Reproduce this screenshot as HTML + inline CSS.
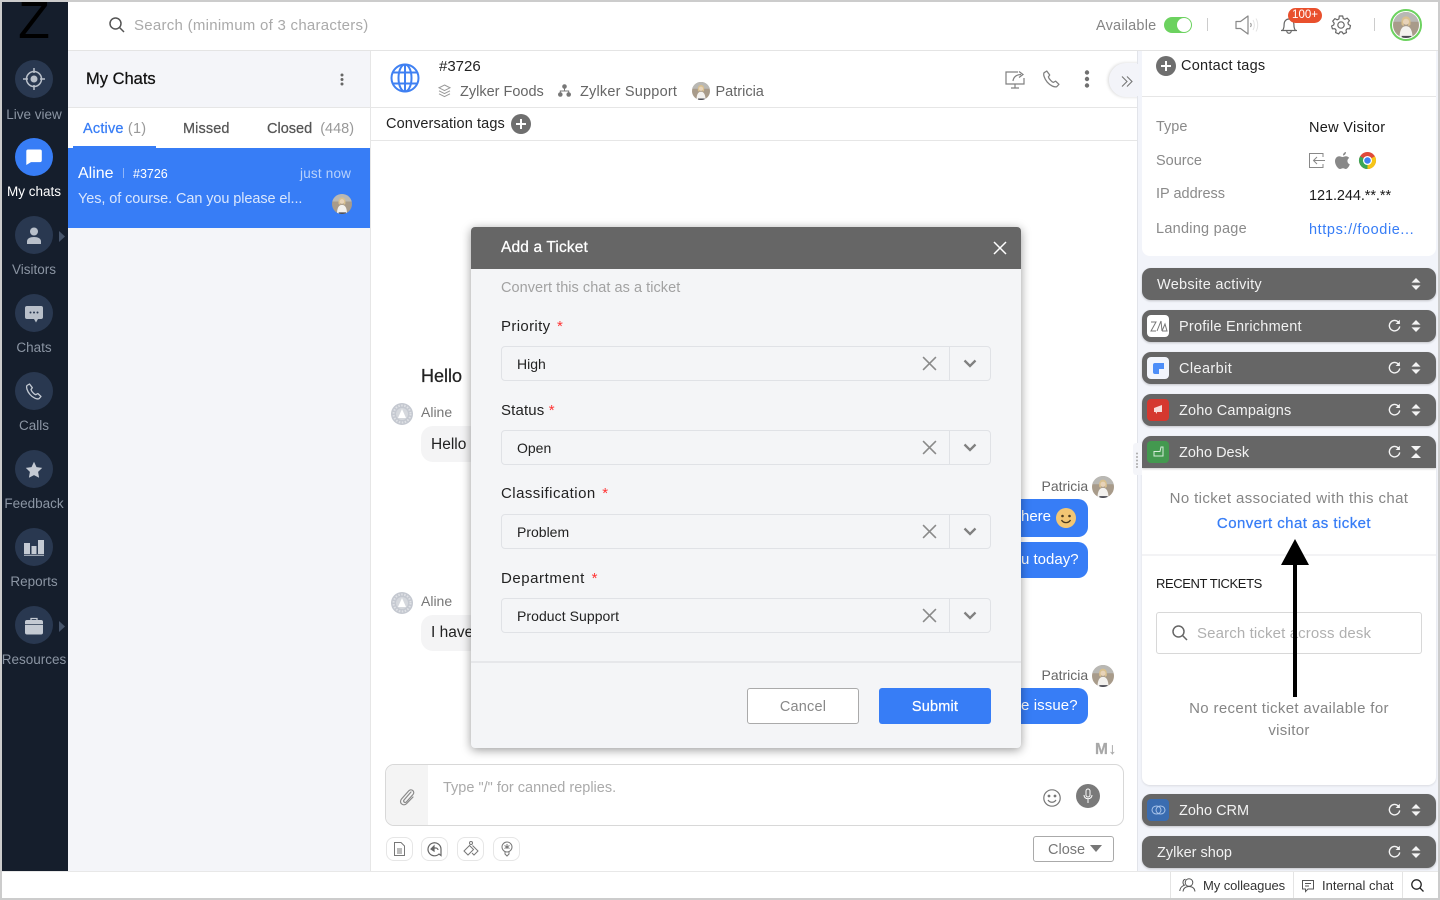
<!DOCTYPE html>
<html lang="en"><head><meta charset="utf-8"><title>Add a Ticket</title>
<style>
*{box-sizing:border-box}
html,body{margin:0;padding:0;width:1440px;height:900px;overflow:hidden;background:#fff;font-family:"Liberation Sans",sans-serif;color:#1d1d1d}
.a{position:absolute}
.t{position:absolute;white-space:nowrap;line-height:20px;height:20px;font-size:14px;margin-top:1px}
svg{position:absolute;overflow:visible}
.m{-webkit-text-stroke:.25px currentColor}
.nav{position:absolute;left:15px;width:38px;height:38px;border-radius:50%;background:#293850}
.lb{position:absolute;left:1px;width:66px;text-align:center;font-size:13.5px;line-height:20px;color:#8b95a3;white-space:nowrap}
.bar{position:absolute;left:1142px;width:294px;height:32px;background:#666;border-radius:9px;box-shadow:0 1px 2px rgba(0,0,0,.2)}
.bt{position:absolute;left:37px;top:7px;line-height:20px;font-size:14.5px;color:#f2f2f2;white-space:nowrap}
.lg{position:absolute;left:5px;top:5px;width:22px;height:22px;border-radius:4px}
.fl{position:absolute;left:30px;width:490px;height:35px;border:1px solid #e0e2e6;border-radius:4px}
.fl span{position:absolute;left:15px;top:7px;font-size:14px;line-height:20px;color:#222}
.fl i{position:absolute;left:447px;top:0;bottom:0;width:1px;background:#e0e2e6}
.lbl{position:absolute;left:30px;font-size:15px;line-height:20px;color:#222;white-space:nowrap;letter-spacing:.4px}
.lbl b{color:#f33;font-weight:400;margin-left:2px}
.sb{position:absolute;width:27px;height:24px;top:837px;border:1px solid #e6e6e6;border-radius:8px;background:#fff}
.bub{position:absolute;background:#377df6;border-radius:0 10px 10px 0;color:#fff;font-size:15px;line-height:20px}
</style></head><body>
<svg width="0" height="0" style="position:absolute"><defs>
<symbol id="av" viewBox="0 0 24 24"><clipPath id="avc"><circle cx="12" cy="12" r="12"/></clipPath><g clip-path="url(#avc)"><rect width="24" height="24" fill="#a89b8a"/><rect width="24" height="9" fill="#b9b8b4"/><path d="M6 24c0-7 2-11 6-11s6 4 6 11z" fill="#f3f1ee"/><path d="M8 12c-1-6 1.500-8 4-8s5 2 4 8l-2 1v-3h-4v3z" fill="#d9c08f"/><circle cx="12" cy="9" r="2.800" fill="#e8d3b8"/><path d="M8 22h9v2H8z" fill="#4a4a52"/></g></symbol>
<symbol id="al" viewBox="0 0 22 22"><circle cx="11" cy="11" r="11" fill="#c4c8d0"/><circle cx="11" cy="11" r="8.500" fill="none" stroke="#dfe1e5" stroke-width="2" stroke-dasharray="1.500 1.500"/><circle cx="11" cy="11" r="6" fill="#d5d8dd"/><path d="M11 6l4 9H7z" fill="#fff"/></symbol>
<symbol id="ud" viewBox="0 0 10 12"><path d="M5 0l4.500 4.600H.5zM5 12L.5 7.400h9z" fill="#f4f4f4"/></symbol>
<symbol id="rf" viewBox="0 0 14 14"><path d="M11.800 4.200A5.600 5.600 0 1 0 12.600 8" fill="none" stroke="#f4f4f4" stroke-width="1.500"/><path d="M12.800 .8v4.600H8.200z" fill="#f4f4f4"/></symbol>
<symbol id="x" viewBox="0 0 14 14"><path d="M1 1l12 12M13 1L1 13" stroke="#8a8a8a" stroke-width="1.500" fill="none"/></symbol>
<symbol id="ch" viewBox="0 0 14 9"><path d="M1.500 1.500L7 7l5.500-5.500" stroke="#808080" stroke-width="2.300" fill="none"/></symbol>
<symbol id="pl" viewBox="0 0 20 20"><circle cx="10" cy="10" r="10" fill="#6f6f6f"/><path d="M10 5v10M5 10h10" stroke="#fff" stroke-width="2"/></symbol>
</defs></svg>

<!-- frame -->
<div class="a" style="left:0;top:0;width:1440px;height:2px;background:#ccc"></div>
<div class="a" style="left:0;top:0;width:2px;height:900px;background:#ccc"></div>
<div class="a" style="left:1438px;top:0;width:2px;height:900px;background:#ccc"></div>
<div class="a" style="left:0;top:898px;width:1440px;height:2px;background:#ccc"></div>

<!-- sidebar -->
<div class="a" style="left:2px;top:2px;width:66px;height:870px;background:#151e2c;overflow:hidden"></div>
<div class="a" style="left:2px;top:872px;width:66px;height:26px;background:#fff"></div>
<div class="a" style="left:14px;top:-4px;width:40px;height:44px;overflow:hidden;text-align:center;font-size:52px;line-height:50px;color:#000">Z</div>

<div class="a" style="left:0;top:1px;width:68px;height:700px">
<div class="nav" style="top:59px"></div>
<svg style="left:22px;top:66px" width="24" height="24" viewBox="0 0 24 24"><circle cx="12" cy="12" r="7.500" fill="none" stroke="#b9c0ca" stroke-width="1.500"/><circle cx="12" cy="12" r="3.500" fill="#b9c0ca"/><path d="M12 1v5M12 18v5M1 12h5M18 12h5" stroke="#b9c0ca" stroke-width="1.500"/></svg>
<div class="lb" style="top:104px">Live view</div>

<div class="nav" style="top:137px;background:#377df6"></div>
<svg style="left:25px;top:147px" width="18" height="18" viewBox="0 0 18 18"><path d="M3 1.500h12a1.800 1.800 0 0 1 1.800 1.800v9a1.800 1.800 0 0 1-1.800 1.800H6L1.300 17V3.300A1.800 1.800 0 0 1 3 1.500z" fill="#fff"/></svg>
<div class="lb" style="top:181px;color:#fff">My chats</div>

<div class="nav" style="top:215px"></div>
<svg style="left:26px;top:226px" width="16" height="17" viewBox="0 0 16 17"><circle cx="8" cy="4.500" r="4" fill="#b9c0ca"/><path d="M1 17v-2.500C1 11.500 4 10 8 10s7 1.500 7 4.500V17z" fill="#b9c0ca"/></svg>
<svg style="left:59px;top:230px" width="6" height="11" viewBox="0 0 6 11"><path d="M0 0l6 5.500L0 11z" fill="#46546a"/></svg>
<div class="lb" style="top:259px">Visitors</div>

<div class="nav" style="top:293px"></div>
<svg style="left:25px;top:305px" width="18" height="17" viewBox="0 0 18 17"><path d="M2 0h14a2 2 0 0 1 2 2v9a2 2 0 0 1-2 2h-3l-2 3.500L9 13H2a2 2 0 0 1-2-2V2a2 2 0 0 1 2-2z" fill="#b9c0ca"/><circle cx="5.500" cy="6.500" r="1" fill="#293850"/><circle cx="9" cy="6.500" r="1" fill="#293850"/><circle cx="12.500" cy="6.500" r="1" fill="#293850"/></svg>
<div class="lb" style="top:337px">Chats</div>

<div class="nav" style="top:371px"></div>
<svg style="left:25px;top:382px" width="17" height="17" viewBox="0 0 17 17"><path d="M4.500 1L2 2.500C1 4 2 8 5 11.500s7 5 9 4.200l2-2.200-3.200-3-2 1.200C9.500 11.500 6.500 8.500 6 6.500l1.300-1.800z" fill="none" stroke="#c4cad3" stroke-width="1.300" stroke-linejoin="round"/></svg>
<div class="lb" style="top:415px">Calls</div>

<div class="nav" style="top:449px"></div>
<svg style="left:25px;top:460px" width="18" height="18" viewBox="0 0 18 18"><path d="M9 .8l2.500 5.300 5.700.8-4.100 4 1 5.800L9 14.100l-5.100 2.600 1-5.800-4.100-4 5.700-.8z" fill="#c4cad3"/></svg>
<div class="lb" style="top:493px">Feedback</div>

<div class="nav" style="top:527px"></div>
<svg style="left:24px;top:538px" width="20" height="17" viewBox="0 0 20 17"><path d="M0 4h6v11H0zM7.500 7h5v8h-5zM14 1h6v14h-6z" fill="#c4cad3"/><path d="M0 16.300h20" stroke="#c4cad3"/></svg>
<div class="lb" style="top:571px">Reports</div>

<div class="nav" style="top:605px"></div>
<svg style="left:25px;top:616px" width="18" height="18" viewBox="0 0 18 18"><path d="M6 3V1.500h6V3" fill="none" stroke="#c4cad3" stroke-width="1.300"/><rect y="3" width="18" height="14.500" rx="2" fill="#c4cad3"/><path d="M0 7.500h18" stroke="#293850" stroke-width=".8"/></svg>
<svg style="left:59px;top:620px" width="6" height="11" viewBox="0 0 6 11"><path d="M0 0l6 5.500L0 11z" fill="#46546a"/></svg>
<div class="lb" style="top:649px">Resources</div>
</div>

<!-- top bar -->
<div class="a" style="left:68px;top:50px;width:1370px;height:1px;background:#e4e4e4"></div>
<svg style="left:109px;top:17px" width="16" height="16" viewBox="0 0 16 16"><circle cx="6.500" cy="6.500" r="5.500" fill="none" stroke="#555" stroke-width="1.500"/><path d="M10.500 10.500L15 15" stroke="#555" stroke-width="1.500"/></svg>
<div class="t" style="left:134px;top:15px;font-size:15px;color:#aaa;letter-spacing:.27px">Search (minimum of 3 characters)</div>
<div class="t" style="left:1096px;top:15px;font-size:14.500px;color:#858585;letter-spacing:.2px">Available</div>
<div class="a" style="left:1164px;top:17px;width:28px;height:16px;border-radius:8px;background:#6cd25f"></div>
<div class="a" style="left:1177px;top:18px;width:14px;height:14px;border-radius:50%;background:#fff"></div>
<div class="a" style="left:1207px;top:18px;width:1px;height:13px;background:#ccc"></div>
<svg style="left:1235px;top:15px" width="26" height="20" viewBox="0 0 26 20"><path d="M1 6.500h4.500L13 1v18l-7.500-5.500H1z" fill="none" stroke="#888" stroke-width="1.200" stroke-linejoin="round"/><path d="M15.500 8c.8 1.200.8 2.800 0 4" fill="none" stroke="#888"/><path d="M18 5c1.800 3 1.800 7 0 10M21 3.500c2.300 4 2.300 9 0 13" fill="none" stroke="#e3e3e3"/></svg>
<svg style="left:1280px;top:15px" width="18" height="20" viewBox="0 0 18 20"><path d="M2.500 15.500c1.200-1.500 1.600-3 1.600-6 0-3.300 2-5.500 4.900-5.500s4.900 2.200 4.900 5.500c0 3 .4 4.500 1.600 6z M1 15.500h16M6.800 16c0 3 4.400 3 4.400 0" fill="none" stroke="#666" stroke-width="1.200"/></svg>
<div class="a" style="left:1288px;top:8px;width:34px;height:15px;border-radius:8px;background:#e9502d;color:#fff;font-size:11.500px;line-height:15px;text-align:center">100+</div>
<svg style="left:1331px;top:15px" width="20" height="20" viewBox="0 0 20 20"><path d="M8.300 1h3.400l.5 2.500 1.700.8 2.300-1.200 2.200 2.600-1.500 2 .5 1.800 2.100 1-.8 3.300-2.500-.1-1.200 1.400.5 2.500-3.100 1.300-1.400-2h-1.900l-1.400 2-3.100-1.300.5-2.500-1.200-1.400-2.500.1L.6 11l2.100-1 .5-1.800-1.500-2 2.200-2.600 2.300 1.200 1.700-.8z" fill="none" stroke="#666" stroke-width="1.200" stroke-linejoin="round"/><circle cx="10" cy="10" r="3.200" fill="none" stroke="#666" stroke-width="1.200"/></svg>
<div class="a" style="left:1374px;top:18px;width:1px;height:13px;background:#ccc"></div>
<div class="a" style="left:1390px;top:9px;width:32px;height:32px;border-radius:50%;border:2px solid #6cd25f"></div>
<svg style="left:1393px;top:12px" width="26" height="26"><use href="#av" width="26" height="26"/></svg>

<!-- list pane -->
<div class="a" style="left:68px;top:51px;width:302px;height:821px;background:#f4f5f9"></div>
<div class="a" style="left:370px;top:51px;width:1px;height:821px;background:#e6e6e6"></div>
<div class="t m" style="left:86px;top:68px;font-size:16.500px;color:#111">My Chats</div>
<svg style="left:340px;top:73px" width="4" height="13"><circle cx="2" cy="2" r="1.500" fill="#666"/><circle cx="2" cy="6.500" r="1.500" fill="#666"/><circle cx="2" cy="11" r="1.500" fill="#666"/></svg>
<div class="a" style="left:68px;top:107px;width:302px;height:41px;background:#fff;border-top:1px solid #e6e6e6"></div>
<div class="t m" style="left:83px;top:118px;font-size:14.500px;color:#377df6;letter-spacing:.2px">Active <span style="color:#999;-webkit-text-stroke:0">(1)</span></div>
<div class="t m" style="left:183px;top:118px;font-size:14.500px;color:#555;letter-spacing:.1px">Missed</div>
<div class="t m" style="left:267px;top:118px;font-size:14.500px;color:#555">Closed <span style="color:#999;-webkit-text-stroke:0">&nbsp;(448)</span></div>
<div class="a" style="left:73px;top:145.500px;width:83px;height:2px;background:#377df6"></div>
<div class="a" style="left:68px;top:148px;width:302px;height:80px;background:#377df6"></div>
<div class="t" style="left:78px;top:163px;font-size:16px;color:#fff">Aline</div>
<div class="a" style="left:123px;top:168px;width:1px;height:10px;background:#8fb5f8"></div>
<div class="t" style="left:133px;top:163px;font-size:12.500px;color:#fff">#3726</div>
<div class="t" style="left:300px;top:163px;font-size:13.500px;color:#b9d2fb;letter-spacing:.2px">just now</div>
<div class="t" style="left:78px;top:188px;font-size:14.500px;color:#d9e6fd;letter-spacing:-.09px">Yes, of course. Can you please el...</div>
<svg style="left:332px;top:194px" width="20" height="20"><use href="#av" width="20" height="20"/></svg>

<!-- main header -->
<svg style="left:390px;top:63px" width="30" height="30" viewBox="0 0 30 30" fill="none" stroke="#3f80f2" stroke-width="2"><circle cx="15" cy="15" r="13.500"/><ellipse cx="15" cy="15" rx="6.500" ry="13.500"/><path d="M15 1.500v27M2.800 9.500h24.400M2.800 20.500h24.400"/></svg>
<div class="t" style="left:439px;top:56px;font-size:15px;color:#222">#3726</div>
<svg style="left:438px;top:84px" width="13" height="14" viewBox="0 0 13 14" fill="none" stroke="#999"><path d="M6.500 1L12 3.800 6.500 6.600 1 3.800z"/><path d="M1 6.800l5.500 2.800L12 6.800M1 9.800l5.500 2.800L12 9.800"/></svg>
<div class="t" style="left:460px;top:81px;font-size:14.500px;color:#666">Zylker Foods</div>
<svg style="left:558px;top:84px" width="13" height="13" viewBox="0 0 13 13"><circle cx="6.500" cy="2.500" r="2.300" fill="#777"/><circle cx="2.300" cy="10.500" r="2.300" fill="#777"/><circle cx="10.700" cy="10.500" r="2.300" fill="#777"/><path d="M6.500 4v3M2.300 9V7h8.400v2" fill="none" stroke="#777"/></svg>
<div class="t" style="left:580px;top:81px;font-size:14.500px;color:#666;letter-spacing:.2px">Zylker Support</div>
<svg style="left:692px;top:82px" width="18" height="18"><use href="#av" width="18" height="18"/></svg>
<div class="t" style="left:715.500px;top:81px;font-size:14.500px;color:#666">Patricia</div>
<div class="a" style="left:371px;top:107px;width:767px;height:1px;background:#e6e6e6"></div>
<div class="t" style="left:386px;top:113px;font-size:14.500px;color:#222;letter-spacing:.12px">Conversation tags</div>
<svg style="left:511px;top:114px" width="20" height="20"><use href="#pl" width="20" height="20"/></svg>
<div class="a" style="left:371px;top:140px;width:767px;height:1px;background:#e6e6e6"></div>
<svg style="left:1005px;top:70px" width="21" height="20" viewBox="0 0 21 20" fill="none" stroke="#808080" stroke-width="1.200"><path d="M13 2H1v12h18V8M10 14v4M6 18h8"/><path d="M8 11c.5-4 3.500-6.500 8-6.500M14 1.500l4 3-4 3" /></svg>
<svg style="left:1042px;top:70px" width="18" height="18" viewBox="0 0 17 17"><path d="M4.500 1L2 2.500C1 4 2 8 5 11.500s7 5 9 4.200l2-2.200-3.200-3-2 1.200C9.500 11.500 6.500 8.500 6 6.500l1.300-1.800z" fill="none" stroke="#808080" stroke-width="1.200" stroke-linejoin="round"/></svg>
<svg style="left:1084px;top:70px" width="6" height="18"><circle cx="3" cy="2.500" r="2.200" fill="#707070"/><circle cx="3" cy="9" r="2.200" fill="#707070"/><circle cx="3" cy="15.500" r="2.200" fill="#707070"/></svg>

<!-- messages behind modal -->
<div class="t m" style="left:421px;top:365px;font-size:18px;color:#222">Hello</div>
<svg style="left:391px;top:403px" width="22" height="22"><use href="#al" width="22" height="22"/></svg>
<div class="t" style="left:421px;top:401px;font-size:14px;color:#777">Aline</div>
<div class="a" style="left:421px;top:426px;width:60px;height:36px;border-radius:12px;background:#f4f4f5"></div>
<div class="t" style="left:431px;top:433.500px;font-size:15.500px;color:#222">Hello</div>
<svg style="left:391px;top:592px" width="22" height="22"><use href="#al" width="22" height="22"/></svg>
<div class="t" style="left:421px;top:590px;font-size:14px;color:#777">Aline</div>
<div class="a" style="left:421px;top:615px;width:60px;height:36px;border-radius:12px;background:#f4f4f5"></div>
<div class="t" style="left:431px;top:622px;font-size:15.500px;color:#222">I have</div>

<div class="t" style="left:1041.500px;top:475px;font-size:14px;color:#666">Patricia</div>
<svg style="left:1092px;top:476px" width="22" height="22"><use href="#av" width="22" height="22"/></svg>
<div class="bub" style="left:1000px;top:499px;width:88px;height:38px;padding:8px 0 0 21px">here</div>
<svg style="left:1056px;top:508px" width="20" height="20" viewBox="0 0 20 20"><circle cx="10" cy="10" r="10" fill="#f3c673"/><circle cx="6.500" cy="8" r="1.300" fill="#4b3a1e"/><circle cx="13.500" cy="8" r="1.300" fill="#4b3a1e"/><path d="M5.500 12c2 3.500 7 3.500 9 0" stroke="#4b3a1e" stroke-width="1.300" fill="none"/></svg>
<div class="bub" style="left:1000px;top:542px;width:88px;height:36px;padding:8px 0 0 21px">u today?</div>
<div class="t" style="left:1041.500px;top:664px;font-size:14px;color:#666">Patricia</div>
<svg style="left:1092px;top:665px" width="22" height="22"><use href="#av" width="22" height="22"/></svg>
<div class="bub" style="left:1000px;top:688px;width:88px;height:36px;padding:8px 0 0 21px;letter-spacing:.1px">e issue?</div>

<!-- composer -->
<div class="t m" style="left:1095px;top:739px;font-size:15.500px;color:#a8a8a8;font-weight:700;letter-spacing:.6px">M↓</div>
<div class="a" style="left:385px;top:764px;width:739px;height:62px;border:1px solid #d8d8d8;border-radius:9px;background:#fff;overflow:hidden"><div class="a" style="left:0;top:0;width:42px;height:60px;background:#f4f4f4"></div></div>
<svg style="left:398px;top:787px" width="18" height="19" viewBox="0 0 18 19"><path d="M13 5L6 13c-1.200 1.500 1 3.500 2.300 2L15 7.500c2.500-3-1.800-6.500-4.300-3.600L3.500 12c-3.200 3.700 2 8 5.200 4.500L15 10" fill="none" stroke="#8a8a8a" stroke-width="1.200" stroke-linecap="round"/></svg>
<div class="t" style="left:443px;top:777px;font-size:14.500px;color:#aaa">Type "/" for canned replies.</div>
<svg style="left:1043px;top:789px" width="18" height="18" viewBox="0 0 18 18" fill="none" stroke="#777" stroke-width="1.200"><circle cx="9" cy="9" r="8.200"/><circle cx="6" cy="7" r=".8" fill="#777"/><circle cx="12" cy="7" r=".8" fill="#777"/><path d="M5 11c2 3 6 3 8 0"/></svg>
<div class="a" style="left:1076px;top:784px;width:24px;height:24px;border-radius:50%;background:#7a7a7a"></div>
<svg style="left:1082px;top:788px" width="12" height="16" viewBox="0 0 12 16" fill="none" stroke="#fff"><rect x="4" y="1" width="4" height="8" rx="2"/><path d="M2 7c0 5 8 5 8 0M6 11v4"/></svg>
<div class="sb" style="left:386px"></div><div class="sb" style="left:421px"></div><div class="sb" style="left:457px"></div><div class="sb" style="left:493px"></div>
<svg style="left:393px;top:842px" width="13" height="14" viewBox="0 0 13 14" fill="none" stroke="#777"><path d="M1.500.5h6.500l3.500 3.500v9.500h-10z"/><path d="M4 7h5M4 9h5M4 11h5"/></svg>
<svg style="left:427px;top:842px" width="16" height="15" viewBox="0 0 16 15" fill="none" stroke="#666" stroke-width="1.200"><path d="M14 13.500l-2-1.500a6.500 6.500 0 1 1 2-5z"/><path d="M4 7l3-3v5z" fill="#666"/><path d="M7 6h2c1 0 2 1 2 2"/></svg>
<svg style="left:463px;top:841px" width="16" height="16" viewBox="0 0 16 16" fill="none" stroke="#777"><circle cx="8" cy="2" r="1.500"/><path d="M6.500 4.500L1 10l4 4 5.500-5.500zM9.500 4.500L15 10l-4 4-2-2"/></svg>
<svg style="left:501px;top:841px" width="12" height="16" viewBox="0 0 12 16" fill="none" stroke="#777"><circle cx="6" cy="6" r="5"/><path d="M6 3v5M3.500 4.500l5 3M8.500 4.500l-5 3M4 11v2l2 2 2-2v-2"/></svg>
<div class="a" style="left:1033px;top:836px;width:81px;height:26px;border:1px solid #aaa;border-radius:3px"></div>
<div class="t" style="left:1048px;top:839px;font-size:14.500px;color:#777">Close</div>
<svg style="left:1090px;top:845px" width="12" height="7"><path d="M0 0h12L6 7z" fill="#777"/></svg>

<!-- right panel -->
<div class="a" style="left:1109px;top:63px;width:34px;height:34px;border-radius:17px 0 0 17px;background:#f3f4f9;box-shadow:-1px 0 3px rgba(0,0,0,.16);clip-path:inset(-5px 4px -5px -5px)"></div>
<div class="a" style="left:1137px;top:51px;width:301px;height:821px;background:#f2f4fa;border-left:1px solid #e2e4ea"></div>
<div class="a" style="left:1109px;top:64px;width:30px;height:32px;border-radius:16px 0 0 16px;background:#f3f4f9"></div>
<div class="a" style="left:1142px;top:51px;width:294px;height:205px;background:#fff;border-radius:0 0 8px 8px"></div>
<svg style="left:1121px;top:76px" width="12" height="11" viewBox="0 0 12 11" fill="none" stroke="#777" stroke-width="1.100"><path d="M1 .5l5 5-5 5M6 .5l5 5-5 5"/></svg>
<svg style="left:1156px;top:56px" width="20" height="20"><use href="#pl" width="20" height="20"/></svg>
<div class="t" style="left:1181px;top:55px;font-size:14.500px;color:#222;letter-spacing:.25px">Contact tags</div>
<div class="a" style="left:1142px;top:96px;width:294px;height:1px;background:#e6e6e6"></div>
<div class="t" style="left:1156px;top:116px;font-size:14.500px;color:#8a8a8a">Type</div>
<div class="t" style="left:1309px;top:117px;font-size:14.500px;color:#1a1a1a;letter-spacing:.3px">New Visitor</div>
<div class="t" style="left:1156px;top:150px;font-size:14.500px;color:#8a8a8a">Source</div>
<svg style="left:1309px;top:153px" width="16" height="15" viewBox="0 0 16 15" fill="none" stroke="#888"><path d="M14 4V.5H.5v14H14V11M16 7.500H5M8 4L4.500 7.500 8 11"/></svg>
<svg style="left:1335px;top:152px" width="15" height="17" viewBox="0 0 15 17"><path d="M11 0c0 2-1.500 3.500-3 3.500C8 1.500 9.500 0 11 0zM7.500 5c1 0 2-.8 3.500-.8 1.300 0 2.500.7 3.200 1.800-2.700 1.500-2.200 5.300.6 6.400-.8 2-2.300 4.600-4 4.600-1 0-1.600-.7-2.800-.7s-1.900.7-2.900.7C3 17 0 12.800 0 9.200c0-3 2-5 4.200-5C5.500 4.200 6.500 5 7.500 5z" fill="#888"/></svg>
<svg style="left:1359px;top:152px" width="17" height="17" viewBox="0 0 24 24"><circle cx="12" cy="12" r="12" fill="#e04a3a"/><path d="M12 12L22.400 6A12 12 0 0 1 12 24z" fill="#f5c518"/><path d="M12 12L12 24A12 12 0 0 1 1.600 6z" fill="#3aa757"/><circle cx="12" cy="12" r="5.500" fill="#3f80f2" stroke="#fff" stroke-width="1.800"/></svg>
<div class="t" style="left:1156px;top:183px;font-size:14.500px;color:#8a8a8a">IP address</div>
<div class="t" style="left:1309px;top:185px;font-size:14.500px;color:#1a1a1a;letter-spacing:-.08px">121.244.**.**</div>
<div class="t" style="left:1156px;top:218px;font-size:14.500px;color:#8a8a8a;letter-spacing:.25px">Landing page</div>
<div class="t" style="left:1309px;top:219px;font-size:14.500px;color:#377df6;letter-spacing:.6px">https://foodie...</div>

<div class="bar" style="top:268px"><div class="bt" style="left:15px;letter-spacing:.28px">Website activity</div><svg style="left:269px;top:10px" width="10" height="12"><use href="#ud"/></svg></div>
<div class="bar" style="top:310px"><div class="lg" style="background:#fff"></div><svg style="left:8px;top:10px" width="18" height="12" viewBox="0 0 18 12" fill="none" stroke="#777"><path d="M1 2h5L1 11h5M7 11l4-10 1 10M12 11l3-7 2 7h-5"/></svg><div class="bt" style="letter-spacing:.24px">Profile Enrichment</div><svg style="left:246px;top:9px" width="13" height="13"><use href="#rf" width="13" height="13"/></svg><svg style="left:269px;top:10px" width="10" height="12"><use href="#ud"/></svg></div>
<div class="bar" style="top:352px"><div class="lg" style="background:#f2f5fc"></div><svg style="left:11px;top:11px" width="11" height="11" viewBox="0 0 11 11"><path d="M2 0h9v6H6v5H2a2 2 0 0 1-2-2V2a2 2 0 0 1 2-2z" fill="#4d8ef8"/></svg><div class="bt" style="letter-spacing:.4px">Clearbit</div><svg style="left:246px;top:9px" width="13" height="13"><use href="#rf" width="13" height="13"/></svg><svg style="left:269px;top:10px" width="10" height="12"><use href="#ud"/></svg></div>
<div class="bar" style="top:394px"><div class="lg" style="background:#d5382f"></div><svg style="left:11px;top:10px" width="11" height="11" viewBox="0 0 11 11"><path d="M1 4l8-3v7H4v2L2.500 8H1z" fill="#f7dcda"/></svg><div class="bt" style="letter-spacing:.14px">Zoho Campaigns</div><svg style="left:246px;top:9px" width="13" height="13"><use href="#rf" width="13" height="13"/></svg><svg style="left:269px;top:10px" width="10" height="12"><use href="#ud"/></svg></div>

<div class="a" style="left:1142px;top:468px;width:294px;height:317px;background:#fff;border-radius:0 0 8px 8px;box-shadow:0 1px 2px rgba(0,0,0,.1)"></div>
<div class="bar" style="top:436px;border-radius:9px 9px 0 0"><div class="lg" style="background:#43994f"></div><svg style="left:11px;top:10px" width="11" height="11" viewBox="0 0 11 11" fill="none" stroke="#d4ecd8"><path d="M1 5.500h6l1-4.500h2v9H1z"/></svg><div class="bt">Zoho Desk</div><svg style="left:246px;top:9px" width="13" height="13"><use href="#rf" width="13" height="13"/></svg><svg style="left:269px;top:10px" width="10" height="12" viewBox="0 0 10 12"><path d="M0 0h10L5 5zM5 7l5 5H0z" fill="#f4f4f4"/></svg></div>
<div class="a" style="left:1133px;top:443px;width:9px;height:32px;background:#f4f5f9;border-radius:3px 0 0 3px"></div>
<svg style="left:1135px;top:452px" width="4" height="16"><g fill="#aaa"><circle cx="2" cy="1.500" r="1"/><circle cx="2" cy="5" r="1"/><circle cx="2" cy="8.500" r="1"/><circle cx="2" cy="12" r="1"/><circle cx="2" cy="15" r="1"/></g></svg>

<div class="t" style="left:1142px;width:294px;top:488px;text-align:center;font-size:15px;color:#858585;letter-spacing:.39px">No ticket associated with this chat</div>
<div class="t m" style="left:1147px;width:294px;top:513px;text-align:center;font-size:15px;color:#377df6;letter-spacing:.45px">Convert chat as ticket</div>
<div class="a" style="left:1142px;top:554px;width:294px;height:2px;background:#f3f3f5"></div>
<div class="t" style="left:1156px;top:572.500px;font-size:13px;color:#1a1a1a;letter-spacing:-.4px">RECENT TICKETS</div>
<div class="a" style="left:1156px;top:612px;width:266px;height:42px;border:1px solid #d8d8d8;border-radius:3px"></div>
<svg style="left:1172px;top:625px" width="16" height="16" viewBox="0 0 16 16"><circle cx="6.500" cy="6.500" r="5.500" fill="none" stroke="#666" stroke-width="1.500"/><path d="M10.500 10.500L15 15" stroke="#666" stroke-width="1.500"/></svg>
<div class="t" style="left:1197px;top:623px;font-size:15px;color:#b0b0b0;letter-spacing:.13px">Search ticket across desk</div>
<div class="t" style="left:1142px;width:294px;top:698px;text-align:center;font-size:15px;color:#858585;letter-spacing:.35px">No recent ticket available for</div>
<div class="t" style="left:1142px;width:294px;top:720px;text-align:center;font-size:15px;color:#858585;letter-spacing:.3px">visitor</div>
<svg style="left:1281px;top:538px" width="28" height="159"><path d="M14 1l14 26h-12v132h-4V27H0z" fill="#000"/></svg>

<div class="bar" style="top:794px"><div class="lg" style="background:#3a6cb0"></div><svg style="left:9px;top:11px" width="15" height="10" viewBox="0 0 15 10" fill="none" stroke="#a9c4ea"><ellipse cx="5.500" cy="5" rx="4.500" ry="4"/><ellipse cx="9.500" cy="5" rx="4.500" ry="4"/></svg><div class="bt">Zoho CRM</div><svg style="left:246px;top:9px" width="13" height="13"><use href="#rf" width="13" height="13"/></svg><svg style="left:269px;top:10px" width="10" height="12"><use href="#ud"/></svg></div>
<div class="bar" style="top:836px"><div class="bt" style="left:15px">Zylker shop</div><svg style="left:246px;top:9px" width="13" height="13"><use href="#rf" width="13" height="13"/></svg><svg style="left:269px;top:10px" width="10" height="12"><use href="#ud"/></svg></div>

<!-- bottom bar -->
<div class="a" style="left:2px;top:871px;width:1436px;height:27px;background:#fff;border-top:1px solid #e8e8e8"></div>
<div class="a" style="left:1170px;top:872px;width:1px;height:26px;background:#e4e4e4"></div>
<div class="a" style="left:1293px;top:872px;width:1px;height:26px;background:#e4e4e4"></div>
<div class="a" style="left:1402px;top:872px;width:1px;height:26px;background:#e4e4e4"></div>
<svg style="left:1179px;top:878px" width="17" height="14" viewBox="0 0 17 14" fill="none" stroke="#555"><circle cx="10" cy="4.500" r="3.800"/><path d="M4 13.500c.5-3.500 3-5 6-5s5.500 1.500 6 5M6.500 1.200C4.500 1.500 4 3 4 4.500c0 1 .5 2 1.500 2.700C3 8 1 10 .8 13"/></svg>
<div class="t" style="left:1203px;top:875px;font-size:13px;color:#333;letter-spacing:-.08px">My colleagues</div>
<svg style="left:1302px;top:880px" width="12" height="12" viewBox="0 0 12 12" fill="none" stroke="#555"><path d="M1 .5h10.500v8.500H6L3.500 11.500V9H.5V.5zM3 3.500h6M3 6h4"/></svg>
<div class="t" style="left:1322px;top:875px;font-size:13px;color:#333">Internal chat</div>
<svg style="left:1411px;top:879px" width="13" height="13" viewBox="0 0 13 13"><circle cx="5.500" cy="5.500" r="4.700" fill="none" stroke="#222" stroke-width="1.300"/><path d="M9 9l3.500 3.500" stroke="#222" stroke-width="1.300"/></svg>

<!-- modal -->
<div class="a" style="left:471px;top:227px;width:550px;height:521px;background:#f4f5f7;border-radius:4px;box-shadow:0 2px 10px rgba(0,0,0,.4)">
  <div class="a" style="left:0;top:0;width:550px;height:41.500px;background:#666;border-radius:4px 4px 0 0"></div>
  <div class="t m" style="left:30px;top:9.500px;font-size:15.500px;color:#fff;letter-spacing:.14px">Add a Ticket</div>
  <svg style="left:522px;top:14px" width="14" height="14" viewBox="0 0 14 14"><path d="M1 1l12 12M13 1L1 13" stroke="#fff" stroke-width="1.500"/></svg>
  <div class="t" style="left:30px;top:50px;font-size:14.500px;color:#a2a2a2;letter-spacing:.04px">Convert this chat as a ticket</div>

  <div class="lbl" style="top:89.500px;letter-spacing:.35px">Priority <b>*</b></div>
  <div class="fl" style="top:119px"><span>High</span><i></i><svg style="left:420px;top:9px" width="15" height="15"><use href="#x" width="15" height="15"/></svg><svg style="left:461px;top:12px" width="14" height="9"><use href="#ch"/></svg></div>
  <div class="lbl" style="top:174px;letter-spacing:.15px">Status <b style="margin-left:0">*</b></div>
  <div class="fl" style="top:203px"><span>Open</span><i></i><svg style="left:420px;top:9px" width="15" height="15"><use href="#x" width="15" height="15"/></svg><svg style="left:461px;top:12px" width="14" height="9"><use href="#ch"/></svg></div>
  <div class="lbl" style="top:257px;letter-spacing:.45px">Classification <b>*</b></div>
  <div class="fl" style="top:287px"><span>Problem</span><i></i><svg style="left:420px;top:9px" width="15" height="15"><use href="#x" width="15" height="15"/></svg><svg style="left:461px;top:12px" width="14" height="9"><use href="#ch"/></svg></div>
  <div class="lbl" style="top:342px;letter-spacing:.55px">Department <b>*</b></div>
  <div class="fl" style="top:371px"><span style="letter-spacing:.06px">Product Support</span><i></i><svg style="left:420px;top:9px" width="15" height="15"><use href="#x" width="15" height="15"/></svg><svg style="left:461px;top:12px" width="14" height="9"><use href="#ch"/></svg></div>

  <div class="a" style="left:0;top:434px;width:550px;height:2px;background:#e6e7ea"></div>
  <div class="a" style="left:276px;top:461px;width:112px;height:36px;background:#fff;border:1px solid #aaa;border-radius:3px;text-align:center;font-size:14.500px;line-height:36px;color:#888;letter-spacing:.2px">Cancel</div>
  <div class="a m" style="left:408px;top:461px;width:112px;height:36px;background:#377df6;border-radius:3px;text-align:center;font-size:14.500px;line-height:38px;color:#fff;letter-spacing:.2px">Submit</div>
</div>
</body></html>
